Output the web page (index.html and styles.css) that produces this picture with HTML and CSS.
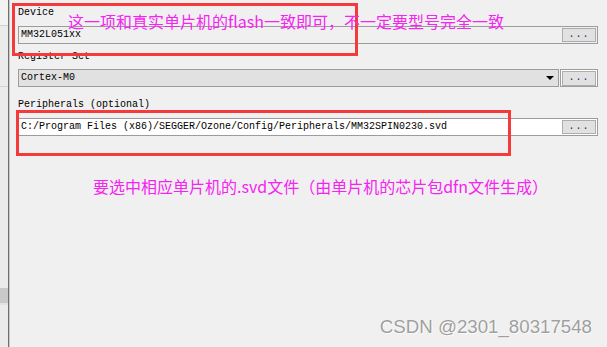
FILE: index.html
```html
<!DOCTYPE html>
<html lang="zh-CN">
<head>
    <meta charset="UTF-8">
    <title>Ozone - Target Device</title>
    <link rel="stylesheet" href="styles.css">
</head>
<body>
    <div class="window">
        <div class="sidebar">
            <div class="side-row side-row-top"></div>
            <div class="side-row side-row-mid"></div>
            <div class="side-sel"></div>
        </div>

        <div class="panel">
            <div class="field field-device">
                <div class="field-label">Device</div>
                <div class="edit edit-readonly">
                    <span class="edit-text">MM32L051xx</span>
                    <button class="dots-btn" type="button">...</button>
                </div>
            </div>

            <div class="field field-register">
                <div class="field-label">Register Set</div>
                <div class="combo-row">
                    <div class="combo">
                        <span class="edit-text">Cortex-M0</span>
                        <span class="combo-arrow"></span>
                    </div>
                    <div class="btn-frame">
                        <button class="dots-btn" type="button">...</button>
                    </div>
                </div>
            </div>

            <div class="field field-periph">
                <div class="field-label">Peripherals (optional)</div>
                <div class="edit edit-white">
                    <span class="edit-text">C:/Program Files (x86)/SEGGER/Ozone/Config/Peripherals/MM32SPIN0230.svd</span>
                    <button class="dots-btn" type="button">...</button>
                </div>
            </div>
        </div>

        <!-- annotations drawn over the dialog -->
        <div class="mark mark-device"></div>
        <div class="mark mark-periph"></div>
        <p class="note note-device">这一项和真实单片机的flash一致即可，不一定要型号完全一致</p>
        <p class="note note-periph">要选中相应单片机的.svd文件（由单片机的芯片包dfn文件生成）</p>
        <div class="watermark">CSDN @2301_80317548</div>
    </div>
</body>
</html>
```

FILE: styles.css
```css
body {
    margin: 0;
    padding: 0;
    background-color: #f0f0f0;
    font-family: "Liberation Mono", "DejaVu Sans Mono", monospace;
}
.window {
    position: relative;
    display: flex;
    width: 607px;
    height: 347px;
    overflow: hidden;
}
.sidebar {
    position: relative;
    width: 8px;
    flex: none;
    background-color: #ebebeb;
    border-right: 1px solid #6f6f6f;
    box-shadow: 1px 0 0 #c8c8c8;
}
.side-row {
    height: 25px;
    border-bottom: 1px solid #d2d2d2;
}
.side-row-top {
    background-color: #f3f3f3;
}
.side-row-mid {
    height: 60px;
}
.side-sel {
    margin-top: 201px;
    height: 15px;
    background-color: #c9c9c9;
    border-bottom: 2px solid #e2e2e2;
}
.panel {
    flex: 1;
    padding: 0 9px 0 9px;
    font-size: 10px;
    color: #000;
}
.field-label {
    height: 12px;
    line-height: 12px;
    margin-bottom: 7px;
}
.field-device {
    margin-top: 7px;
}
.field-register {
    margin-top: 7px;
}
.field-register .field-label {
    margin-bottom: 6px;
}
.field-periph {
    margin-top: 12px;
}
.edit {
    display: flex;
    align-items: center;
    height: 16px;
    border: 1px solid #9c9c9c;
    padding: 0 1px 0 1px;
}
.edit-readonly {
    background-color: #f0f0f0;
}
.edit-white {
    background-color: #fff;
}
.edit-text {
    flex: 1;
    padding-left: 1px;
    white-space: nowrap;
    line-height: 14px;
}
.dots-btn {
    width: 34px;
    height: 14px;
    padding: 0;
    border: 1px solid #adadad;
    background-color: #e1e1e1;
    font-family: "Liberation Mono", monospace;
    font-size: 10px;
    line-height: 10px;
    color: #1c2a6e;
    letter-spacing: 1px;
}
.combo-row {
    display: flex;
    gap: 1px;
    height: 18px;
}
.combo {
    flex: 1;
    display: flex;
    align-items: center;
    background-color: #e1e1e1;
    border: 1px solid #9c9c9c;
    padding: 0 4px 0 1px;
}
.combo-arrow {
    width: 0;
    height: 0;
    border-left: 4px solid transparent;
    border-right: 4px solid transparent;
    border-top: 4px solid #000;
}
.btn-frame {
    display: flex;
    align-items: center;
    justify-content: center;
    width: 36px;
    border: 1px solid #9c9c9c;
    background-color: #fff;
}
.btn-frame .dots-btn {
    height: 15px;
}
.mark {
    position: absolute;
    border: 3px solid #f43a3a;
    box-sizing: border-box;
}
.mark-device {
    left: 12px;
    top: 3px;
    width: 346px;
    height: 53px;
}
.mark-periph {
    left: 16px;
    top: 110px;
    width: 495px;
    height: 46px;
}
.note {
    position: absolute;
    margin: 0;
    font-family: "Noto Sans CJK SC", sans-serif;
    font-size: 16px;
    line-height: 20px;
    color: #f524f0;
    white-space: nowrap;
}
.note-device {
    left: 68px;
    top: 11px;
}
.note-periph {
    left: 93px;
    top: 176px;
}
.watermark {
    position: absolute;
    right: 15px;
    bottom: 9px;
    font-family: "Liberation Sans", Arial, sans-serif;
    font-size: 18.7px;
    color: #9f9f9f;
    text-shadow: 0 0 1px #fff, 1px 1px 0 #fafafa;
}
```
